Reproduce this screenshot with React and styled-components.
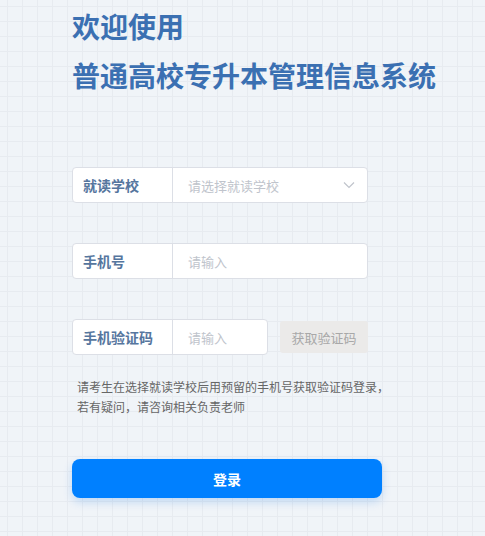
import React from 'react';
import styled, { createGlobalStyle } from 'styled-components';

const GlobalStyle = createGlobalStyle`
	html, body {
		margin: 0;
		padding: 0;
	}
	body {
		font-family: "Noto Sans CJK SC", "Noto Sans", sans-serif;
		background-color: #f0f4f8;
		background-image:
			linear-gradient(to right, #e7ebf0 1px, transparent 1px),
			linear-gradient(to bottom, #e7ebf0 1px, transparent 1px);
		background-size: 15px 15px;
		background-position: 7px 6px;
		min-height: 536px;
	}
`

const Page = styled.div`
	padding: 6px 0 0 72px;
	width: 310px;
`

const Title = styled.h1`
	margin: 0;
	font-size: 28px;
	line-height: 40px;
	font-weight: 700;
	color: #3b70b2;
	white-space: nowrap;
	& + & {
		margin-top: 9px;
	}
`

const Form = styled.div`
	margin-top: 72px;
	display: flex;
	flex-direction: column;
`

const Row = styled.div`
	display: flex;
	align-items: center;
	gap: 12px;
	margin-bottom: ${ ({ gap }) => gap }px;
`

const Field = styled.div`
	display: flex;
	width: ${ ({ width }) => width }px;
	height: 36px;
	box-sizing: border-box;
	border: 1px solid #dcdfe6;
	border-radius: 4px;
	background: #fff;
`

const Label = styled.div`
	width: 100px;
	flex-shrink: 0;
	box-sizing: border-box;
	padding-left: 10px;
	border-right: 1px solid #dcdfe6;
	display: flex;
	align-items: center;
	font-size: 14px;
	font-weight: 700;
	color: #56769e;
`

const Value = styled.div`
	flex-grow: 1;
	display: flex;
	align-items: center;
	justify-content: space-between;
	padding: 0 12px 0 15px;
	font-size: 13px;
	color: #c0c4cc;
`

const CodeButton = styled.div`
	width: 88px;
	height: 32px;
	display: flex;
	align-items: center;
	justify-content: center;
	background: #ebeae9;
	border-radius: 3px;
	font-size: 13px;
	color: #a8a8a8;
`

const Note = styled.p`
	margin: 0 0 42px 5px;
	font-size: 12px;
	line-height: 20px;
	color: #666;
	white-space: nowrap;
`

const LoginButton = styled.button`
	width: 310px;
	height: 39px;
	border: none;
	border-radius: 8px;
	background: #0080ff;
	color: #fff;
	font-family: inherit;
	font-size: 14px;
	font-weight: 700;
	box-shadow: 0 4px 10px rgba(0, 110, 230, 0.2);
`

const Chevron = () => (
	<svg width="12" height="8" viewBox="0 0 12 8" fill="none">
		<path d="M1 1.5 L6 6.5 L11 1.5" stroke="#c0c4cc" strokeWidth="1.2" />
	</svg>
)

export default function App() {
	return (
		<>
			<GlobalStyle />
			<Page>
				<Title>欢迎使用</Title>
				<Title>普通高校专升本管理信息系统</Title>
				<Form>
					<Row gap={40}>
						<Field width={296}>
							<Label>就读学校</Label>
							<Value>
								<span>请选择就读学校</span>
								<Chevron />
							</Value>
						</Field>
					</Row>
					<Row gap={40}>
						<Field width={296}>
							<Label>手机号</Label>
							<Value>请输入</Value>
						</Field>
					</Row>
					<Row gap={22}>
						<Field width={196}>
							<Label>手机验证码</Label>
							<Value>请输入</Value>
						</Field>
						<CodeButton>获取验证码</CodeButton>
					</Row>
					<Note>
						请考生在选择就读学校后用预留的手机号获取验证码登录，
						<br />
						若有疑问，请咨询相关负责老师
					</Note>
					<LoginButton>登录</LoginButton>
				</Form>
			</Page>
		</>
	)
}
